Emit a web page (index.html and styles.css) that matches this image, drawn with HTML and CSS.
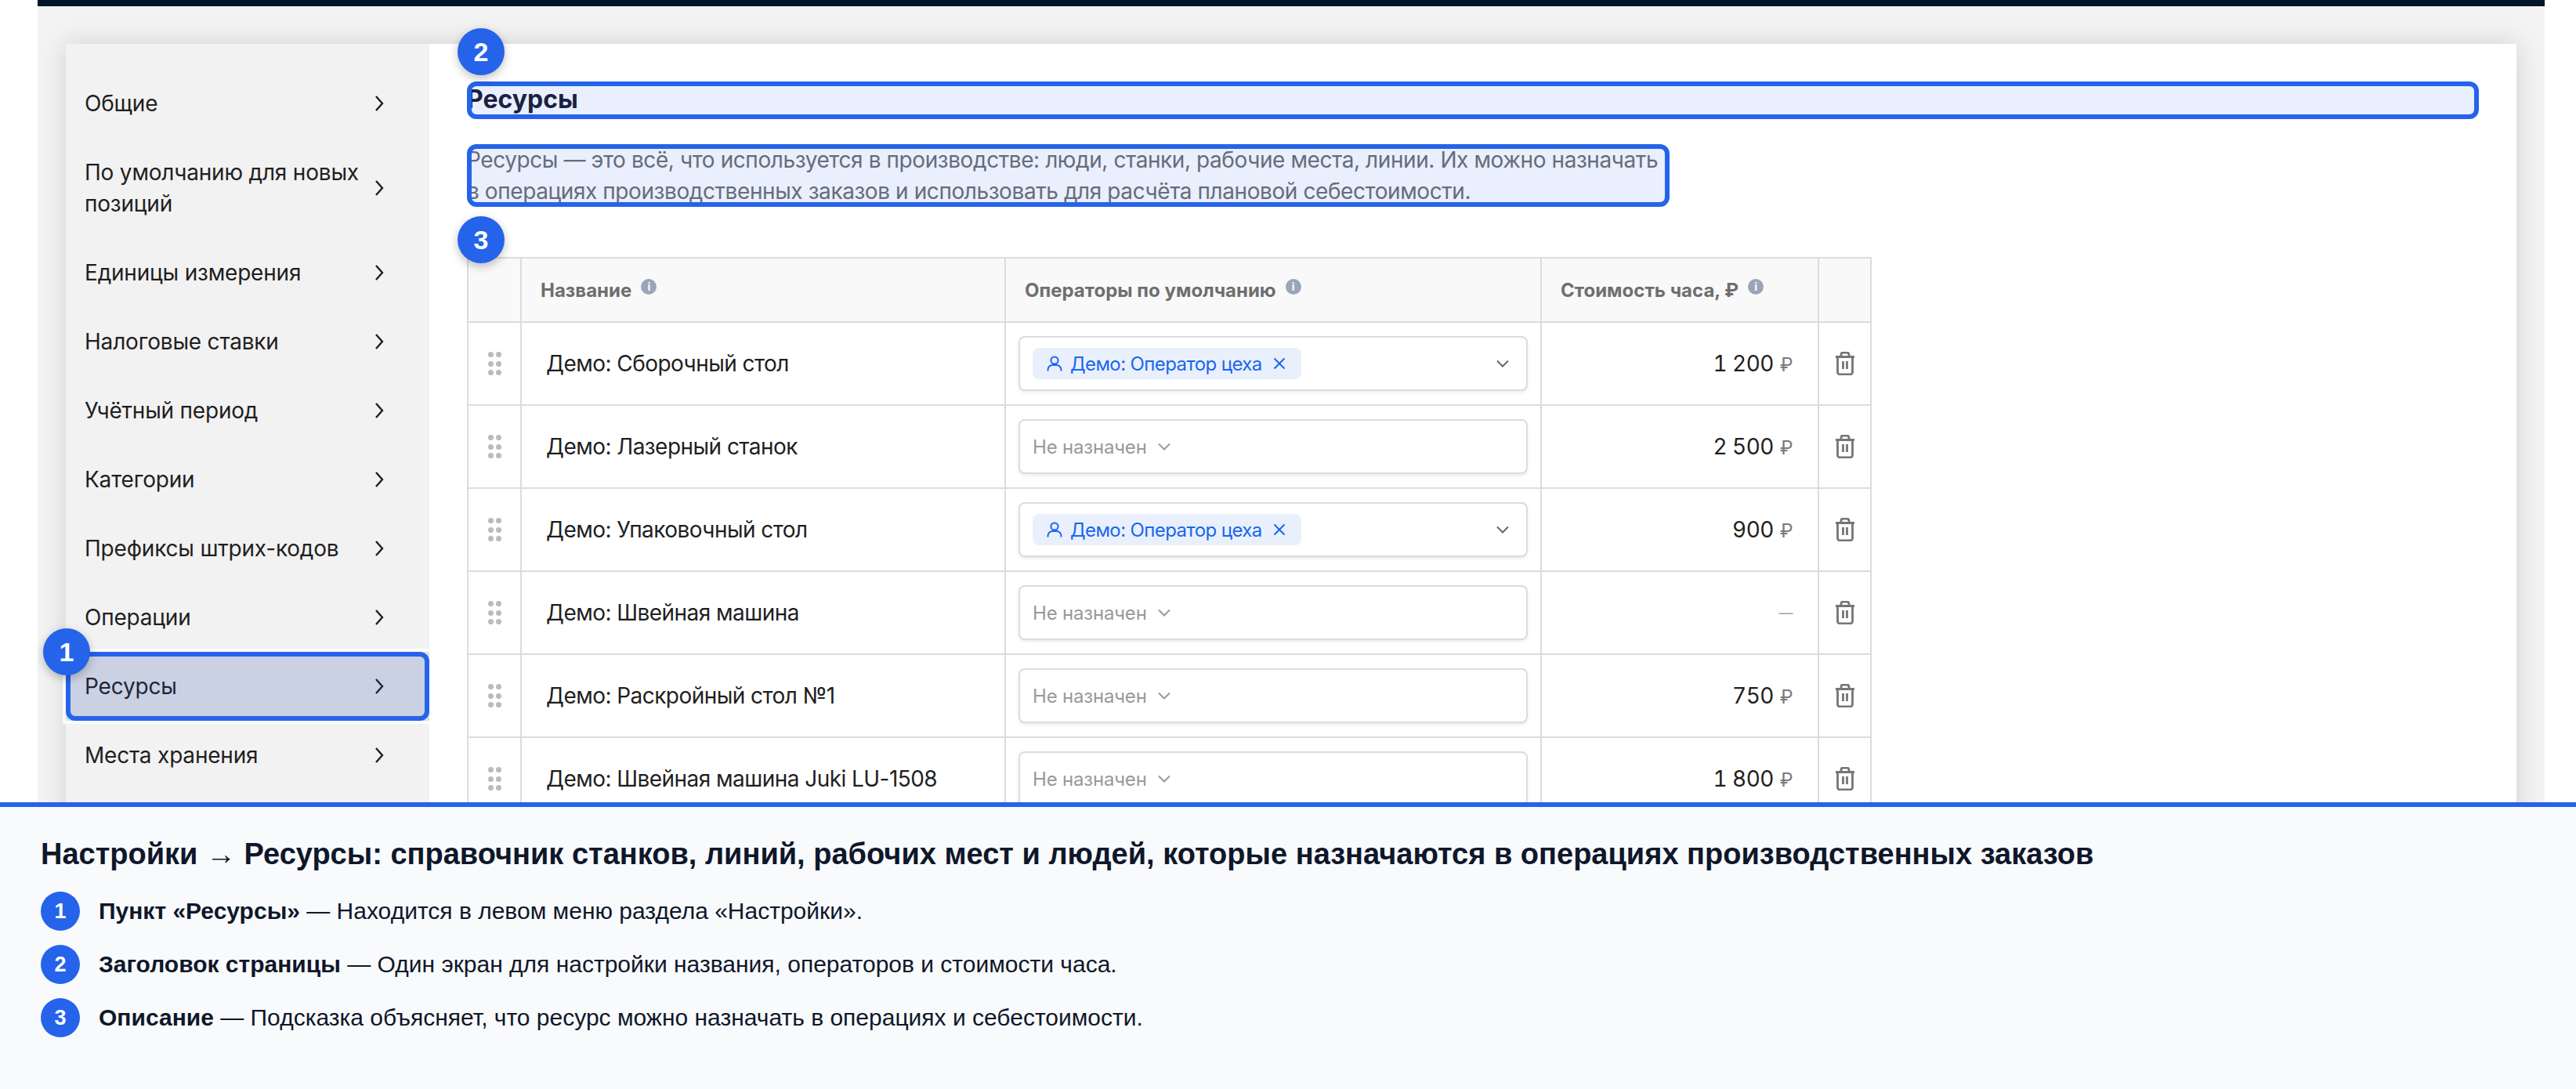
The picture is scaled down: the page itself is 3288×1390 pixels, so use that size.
FILE: index.html
```html
<!DOCTYPE html>
<html lang="ru">
<head>
  <meta charset="UTF-8" />
  <title>Настройки — Ресурсы</title>
  <link rel="stylesheet" href="styles.css">
</head>
<body>
  <div class="stage">
    <div class="app">
      <div class="topbar"></div>
      <div class="card">
        <nav class="sidebar">
          <div class="nav-item"><span>Общие</span><svg class="nav-arrow" viewBox="0 0 12 22"><path d="M2 2l8 9-8 9"/></svg></div>
          <div class="nav-item"><span>По умолчанию для новых позиций</span><svg class="nav-arrow" viewBox="0 0 12 22"><path d="M2 2l8 9-8 9"/></svg></div>
          <div class="nav-item"><span>Единицы измерения</span><svg class="nav-arrow" viewBox="0 0 12 22"><path d="M2 2l8 9-8 9"/></svg></div>
          <div class="nav-item"><span>Налоговые ставки</span><svg class="nav-arrow" viewBox="0 0 12 22"><path d="M2 2l8 9-8 9"/></svg></div>
          <div class="nav-item"><span>Учётный период</span><svg class="nav-arrow" viewBox="0 0 12 22"><path d="M2 2l8 9-8 9"/></svg></div>
          <div class="nav-item"><span>Категории</span><svg class="nav-arrow" viewBox="0 0 12 22"><path d="M2 2l8 9-8 9"/></svg></div>
          <div class="nav-item"><span>Префиксы штрих-кодов</span><svg class="nav-arrow" viewBox="0 0 12 22"><path d="M2 2l8 9-8 9"/></svg></div>
          <div class="nav-item"><span>Операции</span><svg class="nav-arrow" viewBox="0 0 12 22"><path d="M2 2l8 9-8 9"/></svg></div>
          <div class="nav-item active mark"><span>Ресурсы</span><svg class="nav-arrow" viewBox="0 0 12 22"><path d="M2 2l8 9-8 9"/></svg><b class="badge badge-nav">1</b></div>
          <div class="nav-item"><span>Места хранения</span><svg class="nav-arrow" viewBox="0 0 12 22"><path d="M2 2l8 9-8 9"/></svg></div>
        </nav>

        <main class="content">
          <h1 class="page-title mark">Ресурсы<b class="badge badge-title">2</b></h1>
          <p class="page-desc mark">Ресурсы — это всё, что используется в производстве: люди, станки, рабочие места, линии. Их можно назначать в операциях производственных заказов и использовать для расчёта плановой себестоимости.</p>

          <div class="table-wrap">
            <b class="badge badge-table">3</b>
            <table class="res-table">
              <colgroup>
                <col class="col-drag"><col class="col-name"><col class="col-ops"><col class="col-cost"><col class="col-del">
              </colgroup>
              <thead>
                <tr>
                  <th></th>
                  <th>Название<i class="info">i</i></th>
                  <th>Операторы по умолчанию<i class="info">i</i></th>
                  <th>Стоимость часа, ₽<i class="info">i</i></th>
                  <th></th>
                </tr>
              </thead>
              <tbody>
                <tr>
                  <td><div class="drag"><i></i><i></i><i></i><i></i><i></i><i></i></div></td>
                  <td class="name">Демо: Сборочный стол</td>
                  <td class="ops"><div class="select">
                    <span class="chip"><svg class="chip-user" viewBox="0 0 20 20"><circle cx="10" cy="6" r="4.6"/><path d="M1.5 19.5v-1.5a6 6 0 0 1 6-6h5a6 6 0 0 1 6 6v1.5"/></svg>Демо: Оператор цеха<svg class="chip-x" viewBox="0 0 16 16"><path d="M1.5 1.5l13 13M14.5 1.5l-13 13"/></svg></span>
                    <svg class="select-arrow" viewBox="0 0 16 10"><path d="M1 1.5l7 7 7-7"/></svg>
                  </div></td>
                  <td class="cost">1 200<span class="rub">₽</span></td>
                  <td><svg class="trash" viewBox="0 0 26 30"><path d="M1 6.5h24M8 6V3.5A2.5 2.5 0 0 1 10.5 1h5A2.5 2.5 0 0 1 18 3.5V6M3.5 6.5V26a3 3 0 0 0 3 3h13a3 3 0 0 0 3-3V6.5M10.5 12v10M15.5 12v10"/></svg></td>
                </tr>
                <tr>
                  <td><div class="drag"><i></i><i></i><i></i><i></i><i></i><i></i></div></td>
                  <td class="name">Демо: Лазерный станок</td>
                  <td class="ops"><div class="select"><span class="placeholder">Не назначен<svg class="placeholder-arrow" viewBox="0 0 16 10"><path d="M1 1.5l7 7 7-7"/></svg></span></div></td>
                  <td class="cost">2 500<span class="rub">₽</span></td>
                  <td><svg class="trash" viewBox="0 0 26 30"><path d="M1 6.5h24M8 6V3.5A2.5 2.5 0 0 1 10.5 1h5A2.5 2.5 0 0 1 18 3.5V6M3.5 6.5V26a3 3 0 0 0 3 3h13a3 3 0 0 0 3-3V6.5M10.5 12v10M15.5 12v10"/></svg></td>
                </tr>
                <tr>
                  <td><div class="drag"><i></i><i></i><i></i><i></i><i></i><i></i></div></td>
                  <td class="name">Демо: Упаковочный стол</td>
                  <td class="ops"><div class="select">
                    <span class="chip"><svg class="chip-user" viewBox="0 0 20 20"><circle cx="10" cy="6" r="4.6"/><path d="M1.5 19.5v-1.5a6 6 0 0 1 6-6h5a6 6 0 0 1 6 6v1.5"/></svg>Демо: Оператор цеха<svg class="chip-x" viewBox="0 0 16 16"><path d="M1.5 1.5l13 13M14.5 1.5l-13 13"/></svg></span>
                    <svg class="select-arrow" viewBox="0 0 16 10"><path d="M1 1.5l7 7 7-7"/></svg>
                  </div></td>
                  <td class="cost">900<span class="rub">₽</span></td>
                  <td><svg class="trash" viewBox="0 0 26 30"><path d="M1 6.5h24M8 6V3.5A2.5 2.5 0 0 1 10.5 1h5A2.5 2.5 0 0 1 18 3.5V6M3.5 6.5V26a3 3 0 0 0 3 3h13a3 3 0 0 0 3-3V6.5M10.5 12v10M15.5 12v10"/></svg></td>
                </tr>
                <tr>
                  <td><div class="drag"><i></i><i></i><i></i><i></i><i></i><i></i></div></td>
                  <td class="name">Демо: Швейная машина</td>
                  <td class="ops"><div class="select"><span class="placeholder">Не назначен<svg class="placeholder-arrow" viewBox="0 0 16 10"><path d="M1 1.5l7 7 7-7"/></svg></span></div></td>
                  <td class="cost empty">—</td>
                  <td><svg class="trash" viewBox="0 0 26 30"><path d="M1 6.5h24M8 6V3.5A2.5 2.5 0 0 1 10.5 1h5A2.5 2.5 0 0 1 18 3.5V6M3.5 6.5V26a3 3 0 0 0 3 3h13a3 3 0 0 0 3-3V6.5M10.5 12v10M15.5 12v10"/></svg></td>
                </tr>
                <tr>
                  <td><div class="drag"><i></i><i></i><i></i><i></i><i></i><i></i></div></td>
                  <td class="name">Демо: Раскройный стол №1</td>
                  <td class="ops"><div class="select"><span class="placeholder">Не назначен<svg class="placeholder-arrow" viewBox="0 0 16 10"><path d="M1 1.5l7 7 7-7"/></svg></span></div></td>
                  <td class="cost">750<span class="rub">₽</span></td>
                  <td><svg class="trash" viewBox="0 0 26 30"><path d="M1 6.5h24M8 6V3.5A2.5 2.5 0 0 1 10.5 1h5A2.5 2.5 0 0 1 18 3.5V6M3.5 6.5V26a3 3 0 0 0 3 3h13a3 3 0 0 0 3-3V6.5M10.5 12v10M15.5 12v10"/></svg></td>
                </tr>
                <tr>
                  <td><div class="drag"><i></i><i></i><i></i><i></i><i></i><i></i></div></td>
                  <td class="name">Демо: Швейная машина Juki LU-1508</td>
                  <td class="ops"><div class="select"><span class="placeholder">Не назначен<svg class="placeholder-arrow" viewBox="0 0 16 10"><path d="M1 1.5l7 7 7-7"/></svg></span></div></td>
                  <td class="cost">1 800<span class="rub">₽</span></td>
                  <td><svg class="trash" viewBox="0 0 26 30"><path d="M1 6.5h24M8 6V3.5A2.5 2.5 0 0 1 10.5 1h5A2.5 2.5 0 0 1 18 3.5V6M3.5 6.5V26a3 3 0 0 0 3 3h13a3 3 0 0 0 3-3V6.5M10.5 12v10M15.5 12v10"/></svg></td>
                </tr>
              </tbody>
            </table>
          </div>
        </main>
      </div>
    </div>
  </div>

  <footer class="legend">
    <h2 class="legend-title">Настройки → Ресурсы: справочник станков, линий, рабочих мест и людей, которые назначаются в операциях производственных заказов</h2>
    <div class="legend-row"><b class="legend-num">1</b><p><strong>Пункт «Ресурсы»</strong> — Находится в левом меню раздела «Настройки».</p></div>
    <div class="legend-row"><b class="legend-num">2</b><p><strong>Заголовок страницы</strong> — Один экран для настройки названия, операторов и стоимости часа.</p></div>
    <div class="legend-row"><b class="legend-num">3</b><p><strong>Описание</strong> — Подсказка объясняет, что ресурс можно назначать в операциях и себестоимости.</p></div>
  </footer>
</body>
</html>
```

FILE: styles.css
```css
* {
  box-sizing: border-box;
}
body {
  margin: 0;
  height: 100vh;
  overflow: hidden;
  background-color: #fff;
  color: #1f1f1f;
  font-family: Inter, "Noto Sans", sans-serif;
  display: flex;
  flex-direction: column;
}

/* screenshot area */
.stage {
  flex: none;
  height: 1024px;
  padding: 0 40px 0 48px;
  overflow: hidden;
}
.app {
  height: 1200px;
  background-color: #f3f3f3;
}
.topbar {
  height: 8px;
  background-color: #001529;
}
.card {
  display: flex;
  margin: 48px 36px 0;
  background-color: #fff;
  box-shadow: 0 0 32px rgba(0,0,0,0.14);
  min-height: 1100px;
}

/* sidebar */
.sidebar {
  flex: none;
  width: 464px;
  padding-top: 32px;
  background-color: #f2f2f2;
}
.nav-item {
  display: flex;
  align-items: center;
  justify-content: space-between;
  gap: 16px;
  min-height: 88px;
  padding: 24px 58px 24px 24px;
  font-size: 28px;
  line-height: 40px;
  letter-spacing: -0.2px;
}
.nav-arrow {
  flex: none;
  width: 12px;
  height: 22px;
  fill: none;
  stroke: #1f1f1f;
  stroke-width: 2.4;
}
.nav-item.active {
  background-color: #dddee1;
}

/* highlight over a marked element */
.mark {
  position: relative;
}
.mark::after {
  content: "";
  position: absolute;
  inset: 0;
  border: 6px solid #2563eb;
  border-radius: 12px;
  background-color: rgba(37,99,235,0.1);
  pointer-events: none;
}
.nav-item.mark {
  box-shadow: 0 0 0 4px rgba(255,255,255,0.8);
}
.badge {
  position: absolute;
  z-index: 2;
  width: 60px;
  height: 60px;
  border-radius: 50%;
  background-color: #2563eb;
  color: #fff;
  font-family: "Liberation Sans", Arial, sans-serif;
  font-size: 34px;
  font-weight: 700;
  line-height: 60px;
  letter-spacing: 0;
  text-align: center;
  box-shadow: 0 4px 12px rgba(0,0,0,0.25);
}
.badge-nav {
  left: -29px;
  top: -30px;
}
.badge-title {
  left: -12px;
  top: -68px;
}
.badge-table {
  left: -12px;
  top: -52px;
}

/* content */
.content {
  flex: 1;
  padding: 48px;
}
.page-title {
  margin: 0;
  height: 48px;
  font-size: 32px;
  line-height: 46px;
  font-weight: 700;
  color: #1a1a2e;
}
.page-desc {
  margin: 32px 0 0;
  width: 1535px;
  font-size: 28px;
  line-height: 40px;
  letter-spacing: -0.42px;
  color: #6e6e6e;
}
.table-wrap {
  position: relative;
  margin-top: 64px;
  width: 1791px;
}

/* table */
.res-table {
  width: 100%;
  table-layout: fixed;
  border-collapse: collapse;
  border: 2px solid #dcdcdc;
}
.col-drag { width: 68px; }
.col-name { width: 618px; }
.col-ops { width: 684px; }
.col-cost { width: 354px; }
.col-del { width: 67px; }
.res-table th,
.res-table td {
  border: 2px solid #dcdcdc;
  padding: 0;
  height: 106px;
}
.res-table th {
  height: 82px;
  padding: 0 24px;
  background-color: #f9f9f9;
  color: #6e6e6e;
  font-size: 24px;
  font-weight: 700;
  text-align: left;
  white-space: nowrap;
}
.info {
  display: inline-block;
  position: relative;
  top: -6px;
  width: 20px;
  height: 20px;
  margin-left: 12px;
  border-radius: 50%;
  background-color: #9aa5b8;
  color: #fff;
  font-size: 14px;
  font-style: normal;
  font-weight: 700;
  line-height: 20px;
  text-align: center;
  vertical-align: middle;
}
.drag {
  display: grid;
  grid-template-columns: 7px 7px;
  gap: 4.5px 3px;
  justify-content: center;
}
.drag i {
  width: 7px;
  height: 7px;
  border-radius: 50%;
  background-color: #bbb;
}
.name {
  padding-left: 31px !important;
  font-size: 28px;
  letter-spacing: -0.55px;
}
.ops {
  padding: 0 16px !important;
}
.select {
  display: flex;
  align-items: center;
  justify-content: space-between;
  height: 70px;
  padding: 0 16px;
  background-color: #fff;
  border: 2px solid #dcdcdc;
  border-radius: 8px;
  box-shadow: 0 2px 4px rgba(0,0,0,0.08);
}
.chip {
  display: inline-flex;
  align-items: center;
  height: 40px;
  padding: 0 20px 0 16px;
  border-radius: 8px;
  background-color: #e9f0fc;
  color: #1a66f0;
  font-size: 24px;
  letter-spacing: -0.6px;
  white-space: nowrap;
}
.chip-user {
  width: 20px;
  height: 20px;
  margin: 0 10px 0 2px;
  fill: none;
  stroke: #1a66f0;
  stroke-width: 2;
}
.chip-x {
  width: 16px;
  height: 16px;
  margin-left: 14px;
  fill: none;
  stroke: #1a66f0;
  stroke-width: 2;
}
.select-arrow {
  width: 16px;
  height: 10px;
  margin-right: 6px;
  fill: none;
  stroke: #666;
  stroke-width: 2;
}
.placeholder {
  display: inline-flex;
  align-items: center;
  color: #999;
  font-size: 24px;
  letter-spacing: -0.2px;
}
.placeholder-arrow {
  width: 16px;
  height: 10px;
  margin-left: 14px;
  fill: none;
  stroke: #999;
  stroke-width: 2;
}
.cost {
  padding-right: 32px !important;
  font-size: 28px;
  font-variant-numeric: tabular-nums;
  letter-spacing: -0.6px;
  text-align: right;
  white-space: nowrap;
}
.cost.empty {
  color: #a6a6a6;
  font-size: 18px;
}
.rub {
  margin-left: 8px;
  color: #7a7a7a;
  font-size: 24px;
}
.trash {
  display: block;
  width: 26px;
  height: 30px;
  margin: 0 auto;
  fill: none;
  stroke: #757575;
  stroke-width: 2.8;
}

/* legend under the screenshot */
.legend {
  flex: 1;
  padding: 38px 52px 0;
  background-color: #f8fafc;
  border-top: 6px solid #2563eb;
  color: #0f172a;
  font-family: "Liberation Sans", Arial, sans-serif;
}
.legend-title {
  margin: 0 0 26px;
  font-size: 38px;
  line-height: 44px;
  font-weight: 700;
}
.legend-row {
  display: flex;
  align-items: center;
  gap: 24px;
  height: 50px;
  margin-bottom: 18px;
  font-size: 30px;
}
.legend-row p {
  margin: 0;
}
.legend-num {
  flex: none;
  width: 50px;
  height: 50px;
  border-radius: 50%;
  background-color: #2563eb;
  color: #fff;
  font-size: 27px;
  line-height: 50px;
  text-align: center;
}
```
